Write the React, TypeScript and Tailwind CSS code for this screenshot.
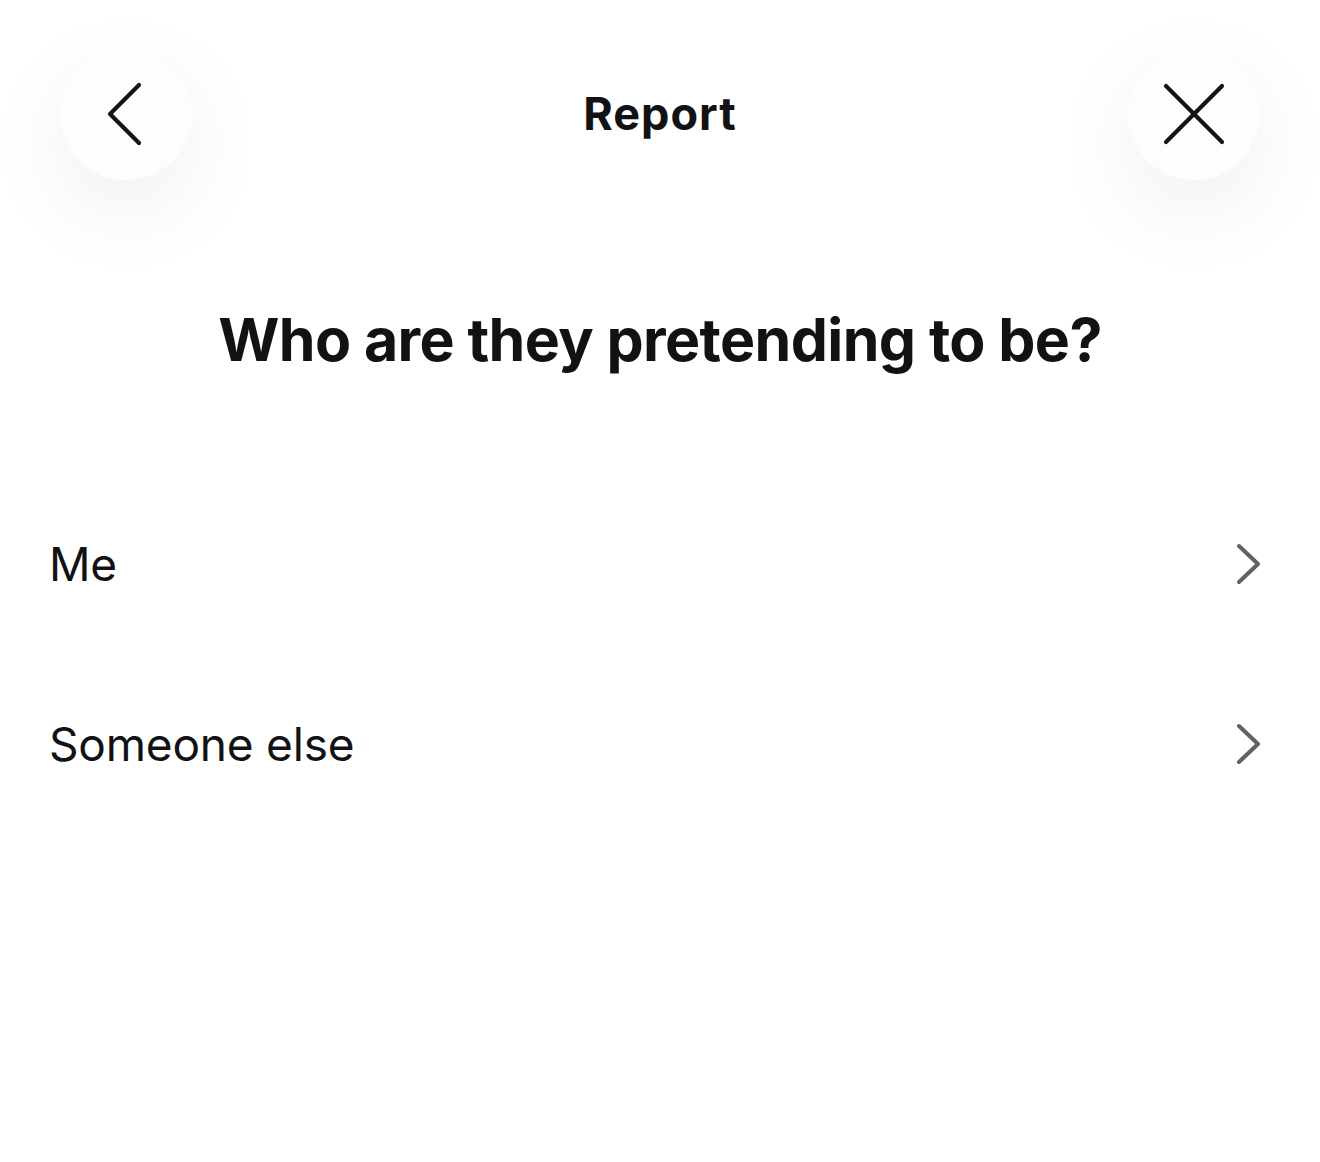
import React from "react";

function CircleBtn({ children }: { children: React.ReactNode }) {
  return (
    <div className="flex h-[132px] w-[132px] items-center justify-center rounded-full bg-[#fdfdfd] shadow-[0_30px_90px_rgba(0,0,0,0.065)]">
      {children}
    </div>
  );
}

function Row({ label }: { label: string }) {
  return (
    <div className="flex h-[180px] items-center justify-between pl-[49px] pr-[58px]">
      <span className="text-[46px] leading-none text-[#111214] tracking-[-0.2px]">{label}</span>
      <svg width="26" height="42" viewBox="0 0 26 42" fill="none">
        <path d="M3 3 L22 21 L3 39" stroke="#5f6267" strokeWidth="4" strokeLinecap="round" strokeLinejoin="round" />
      </svg>
    </div>
  );
}

export default function App() {
  return (
    <div className="min-h-[1162px] w-[1320px] bg-white font-['Inter','Noto_Sans',sans-serif] text-[#111214]">
      <div className="flex items-center justify-between px-[60px] pt-[48px]">
        <CircleBtn>
          <svg width="40" height="64" viewBox="0 0 40 64" fill="none">
            <path d="M33 3 L4 32 L33 61" stroke="#151515" strokeWidth="4.2" strokeLinecap="round" strokeLinejoin="round" />
          </svg>
        </CircleBtn>
        <span className="text-[45px] font-bold tracking-[1px]">Report</span>
        <CircleBtn>
          <svg width="62" height="62" viewBox="0 0 62 62" fill="none">
            <path d="M3 3 L59 59 M59 3 L3 59" stroke="#151515" strokeWidth="4.2" strokeLinecap="round" />
          </svg>
        </CircleBtn>
      </div>
      <h1 className="mt-[130px] text-center text-[59px] font-bold leading-none tracking-[-0.6px]">
        Who are they pretending to be?
      </h1>
      <div className="mt-[105px]">
        <Row label="Me" />
        <Row label="Someone else" />
      </div>
    </div>
  );
}
